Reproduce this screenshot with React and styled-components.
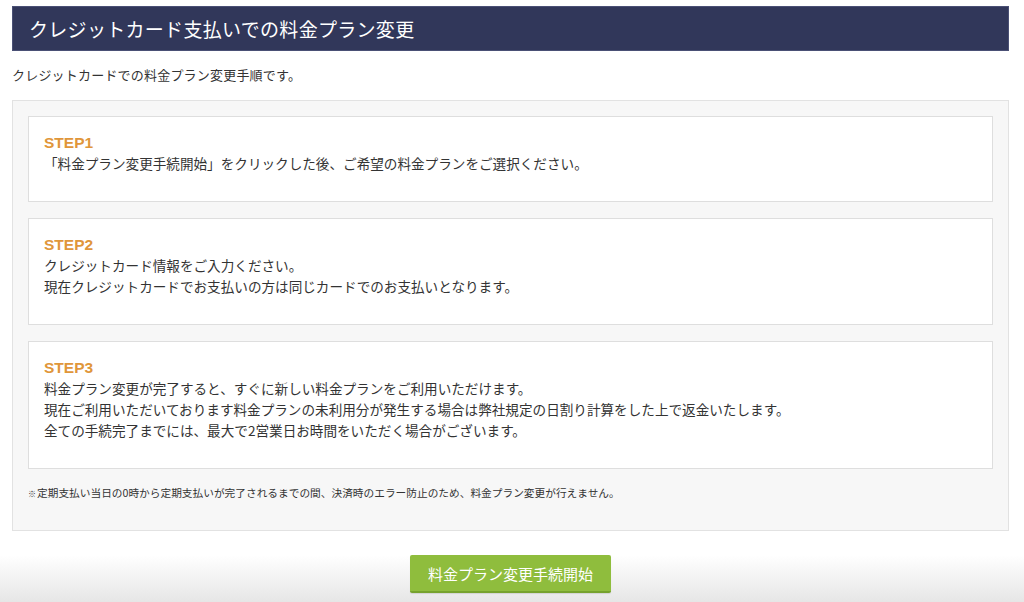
import React from "react";
import styled, { createGlobalStyle } from "styled-components";

const Global = createGlobalStyle`
  html, body { margin: 0; padding: 0; }
  body {
    min-height: 602px;
    background: linear-gradient(to bottom, #ffffff 0px, #ffffff 555px, #e6e6e6 602px);
    font-family: "Noto Sans CJK JP", "Noto Sans", sans-serif;
    color: #333;
  }
`;

const Page = styled.div`
  margin: 0 15px 0 12px;
  padding-top: 6px;
`;

const TitleBar = styled.h1`
  margin: 0;
  height: 45px;
  display: flex;
  align-items: center;
  padding: 0 16px;
  background: #31375a;
  color: #fff;
  font-size: 19px;
  font-weight: 400;
  letter-spacing: 0.3px;
  border: 1px solid #4a5075;
  box-sizing: border-box;
`;

const Lead = styled.p`
  margin: 14px 0 0;
  font-size: 13px;
  line-height: 20px;
  letter-spacing: 0.2px;
`;

const Panel = styled.div`
  margin-top: 15px;
  background: #f7f7f7;
  border: 1px solid #e2e2e2;
  padding: 15px 15px 28px;
  display: flex;
  flex-direction: column;
  gap: 16px;
`;

const Card = styled.div`
  background: #fff;
  border: 1px solid #dedede;
  padding: 16px 15px 27px;
`;

const StepLabel = styled.div`
  font-family: "Liberation Sans", Arial, sans-serif;
  font-weight: 700;
  font-size: 15.5px;
  line-height: 20px;
  color: #e0963a;
`;

const Body = styled.div`
  font-size: 13.6px;
  line-height: 21px;
  color: #333;
`;

const Note = styled.p`
  margin: 0;
  font-size: 10.7px;
  line-height: 16px;
  color: #333;
`;

const Mark = styled.span`
  font-size: 8px;
  margin-right: 1px;
`;

const Actions = styled.div`
  display: flex;
  justify-content: center;
  padding-top: 24px;
`;

const Button = styled.button`
  width: 201px;
  height: 38px;
  border: none;
  border-bottom: 2px solid #76a22d;
  border-radius: 2px;
  background: #8fbd3d;
  color: #fff;
  font-family: "Noto Sans CJK JP", sans-serif;
  font-size: 15px;
  cursor: pointer;
  box-shadow: 0 1px 1px rgba(0, 0, 0, 0.1);
`;

const steps = [
  {
    label: "STEP1",
    lines: ["「料金プラン変更手続開始」をクリックした後、ご希望の料金プランをご選択ください。"],
  },
  {
    label: "STEP2",
    lines: [
      "クレジットカード情報をご入力ください。",
      "現在クレジットカードでお支払いの方は同じカードでのお支払いとなります。",
    ],
  },
  {
    label: "STEP3",
    lines: [
      "料金プラン変更が完了すると、すぐに新しい料金プランをご利用いただけます。",
      "現在ご利用いただいております料金プランの未利用分が発生する場合は弊社規定の日割り計算をした上で返金いたします。",
      "全ての手続完了までには、最大で2営業日お時間をいただく場合がございます。",
    ],
  },
];

export default function App() {
  return (
    <>
      <Global />
      <Page>
        <TitleBar>クレジットカード支払いでの料金プラン変更</TitleBar>
        <Lead>クレジットカードでの料金プラン変更手順です。</Lead>
        <Panel>
          {steps.map((s) => (
            <Card key={s.label}>
              <StepLabel>{s.label}</StepLabel>
              <Body>
                {s.lines.map((l, i) => (
                  <div key={i}>{l}</div>
                ))}
              </Body>
            </Card>
          ))}
          <Note>
            <Mark>※</Mark>定期支払い当日の0時から定期支払いが完了されるまでの間、決済時のエラー防止のため、料金プラン変更が行えません。
          </Note>
        </Panel>
        <Actions>
          <Button>料金プラン変更手続開始</Button>
        </Actions>
      </Page>
    </>
  );
}
